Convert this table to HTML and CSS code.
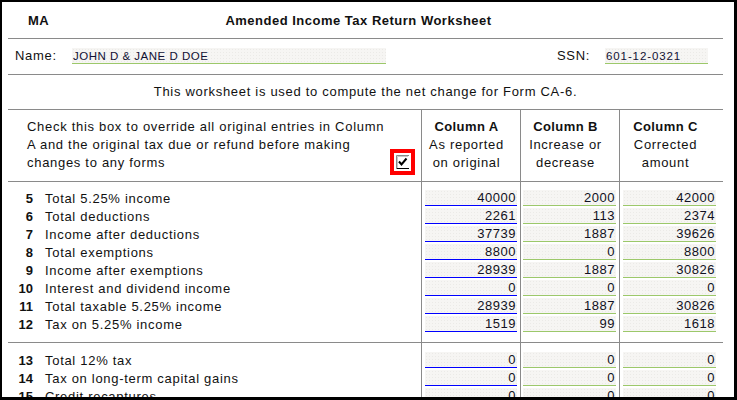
FILE: index.html
```html
<!DOCTYPE html>
<html>
<head>
<meta charset="utf-8">
<link rel="stylesheet" href="styles.css">
</head>
<body>
<div class="frame">
  <div class="sheet">
    <div class="title-row">
      <div class="state">MA</div>
      <div class="title">Amended Income Tax Return Worksheet</div>
      <div class="title-spacer"></div>
    </div>
    <div class="name-row">
      <span class="lbl name-lbl">Name:</span>
      <span class="field name-field">JOHN D &amp; JANE D DOE</span>
      <span class="spacer"></span>
      <span class="lbl ssn-lbl">SSN:</span>
      <span class="field ssn-field">601-12-0321</span>
    </div>
    <div class="intro">This worksheet is used to compute the net change for Form CA-6.</div>

    <div class="sec head-sec">
      <div class="override">
        <div class="override-text">Check this box to override all original entries in Column<br>A and the original tax due or refund before making<br>changes to any forms</div>
        <div class="chk-wrap">
          <svg class="chk" width="14" height="15" viewBox="0 0 14 15">
            <path d="M0.5 14 V0.5 H13" fill="none" stroke="#8a8a8a" stroke-width="1"/>
            <path d="M1.5 13 V1.5 H12" fill="none" stroke="#c8c8c8" stroke-width="1"/>
            <path d="M3 6.5 L5.5 9.5 L10.5 3.5" fill="none" stroke="#000" stroke-width="2"/>
            <path d="M1 13.5 H13" fill="none" stroke="#000" stroke-width="1"/>
          </svg>
        </div>
      </div>
      <div class="colhead"><b>Column A</b><br>As reported<br>on original</div>
      <div class="colhead"><b>Column B</b><br>Increase or<br>decrease</div>
      <div class="colhead colc"><b>Column C</b><br>Corrected<br>amount</div>
    </div>

    <div class="sec rows-sec first">
      <div class="lab"><span class="num">5</span><span>Total 5.25% income</span></div>
      <div class="cell a"><span class="val va">40000</span></div>
      <div class="cell b"><span class="val vg">2000</span></div>
      <div class="cell c"><span class="val vg">42000</span></div>

      <div class="lab"><span class="num">6</span><span>Total deductions</span></div>
      <div class="cell a"><span class="val va">2261</span></div>
      <div class="cell b"><span class="val vg">113</span></div>
      <div class="cell c"><span class="val vg">2374</span></div>

      <div class="lab"><span class="num">7</span><span>Income after deductions</span></div>
      <div class="cell a"><span class="val va">37739</span></div>
      <div class="cell b"><span class="val vg">1887</span></div>
      <div class="cell c"><span class="val vg">39626</span></div>

      <div class="lab"><span class="num">8</span><span>Total exemptions</span></div>
      <div class="cell a"><span class="val va">8800</span></div>
      <div class="cell b"><span class="val vg">0</span></div>
      <div class="cell c"><span class="val vg">8800</span></div>

      <div class="lab"><span class="num">9</span><span>Income after exemptions</span></div>
      <div class="cell a"><span class="val va">28939</span></div>
      <div class="cell b"><span class="val vg">1887</span></div>
      <div class="cell c"><span class="val vg">30826</span></div>

      <div class="lab"><span class="num">10</span><span>Interest and dividend income</span></div>
      <div class="cell a"><span class="val va">0</span></div>
      <div class="cell b"><span class="val vg">0</span></div>
      <div class="cell c"><span class="val vg">0</span></div>

      <div class="lab"><span class="num">11</span><span>Total taxable 5.25% income</span></div>
      <div class="cell a"><span class="val va">28939</span></div>
      <div class="cell b"><span class="val vg">1887</span></div>
      <div class="cell c"><span class="val vg">30826</span></div>

      <div class="lab"><span class="num">12</span><span>Tax on 5.25% income</span></div>
      <div class="cell a"><span class="val va">1519</span></div>
      <div class="cell b"><span class="val vg">99</span></div>
      <div class="cell c"><span class="val vg">1618</span></div>
    </div>

    <div class="sec rows-sec second">
      <div class="lab"><span class="num">13</span><span>Total 12% tax</span></div>
      <div class="cell a"><span class="val va">0</span></div>
      <div class="cell b"><span class="val vg">0</span></div>
      <div class="cell c"><span class="val vg">0</span></div>

      <div class="lab"><span class="num">14</span><span>Tax on long-term capital gains</span></div>
      <div class="cell a"><span class="val va">0</span></div>
      <div class="cell b"><span class="val vg">0</span></div>
      <div class="cell c"><span class="val vg">0</span></div>

      <div class="lab"><span class="num">15</span><span>Credit recaptures</span></div>
      <div class="cell a"><span class="val va">0</span></div>
      <div class="cell b"><span class="val vg">0</span></div>
      <div class="cell c"><span class="val vg">0</span></div>
    </div>
  </div>
</div>
</body>
</html>
```

FILE: styles.css
```css
* { box-sizing: border-box; }
html, body { margin: 0; padding: 0; background: #fff; }
body {
  font-family: "Liberation Sans", Arial, sans-serif;
  font-size: 13px;
  color: #111;
  letter-spacing: 0.7px;
}
.frame {
  width: 737px;
  height: 400px;
  border-style: solid;
  border-color: #000;
  border-width: 2px 3px 3px 2px;
  overflow: hidden;
  background: #fff;
}
.sheet {
  margin-left: 6px;
  width: 715px;
}
.title-row {
  display: flex;
  align-items: center;
  height: 37px;
  border-bottom: 1px solid #8a8a8a;
  font-weight: bold;
  letter-spacing: 0.5px;
}
.state { width: 60px; padding-left: 20px; }
.title { flex: 1; text-align: center; }
.title-spacer { width: 74px; }

.name-row {
  display: flex;
  align-items: center;
  height: 36px;
  padding-bottom: 2px;
  border-bottom: 1px solid #8a8a8a;
}
.lbl { display: block; }
.name-lbl { width: 64px; padding-left: 7px; }
.ssn-lbl { width: 48px; }
.spacer { flex: 1; }
.field {
  display: block;
  height: 16px;
  line-height: 16px;
  font-size: 11.5px;
  letter-spacing: 0.5px;
  padding-left: 1px;
  background-color: #f6f5f3;
  background-image: radial-gradient(#ebeae7 0.6px, transparent 0.8px);
  background-size: 3px 3px;
  border-bottom: 1px solid #9cc86a;
  color: #111133;
}
.name-field { width: 314px; }
.ssn-field { width: 103px; margin-right: 15px; letter-spacing: 0.9px; }

.intro {
  height: 35px;
  line-height: 33px;
  text-align: center;
  border-bottom: 1px solid #8a8a8a;
}

.sec {
  display: grid;
  grid-template-columns: 413px 99px 99px 104px;
  border-bottom: 1px solid #8a8a8a;
  background-image:
    linear-gradient(#8a8a8a, #8a8a8a),
    linear-gradient(#8a8a8a, #8a8a8a),
    linear-gradient(#8a8a8a, #8a8a8a);
  background-size: 1px 100%, 1px 100%, 1px 100%;
  background-position: 413px 0, 512px 0, 611px 0;
  background-repeat: no-repeat;
}
.head-sec {
  padding: 8px 0 9px;
  line-height: 18px;
}
.override {
  display: flex;
  padding-left: 19px;
}
.override-text { flex: 1; }
.chk-wrap {
  align-self: flex-end;
  width: 25px;
  height: 26px;
  margin: 0 6px -3px 0;
  border: 4px solid #f00;
  background: #fff;
  display: flex;
  align-items: center;
  justify-content: center;
}
.chk { display: block; }
.colhead {
  text-align: center;
  padding-right: 9px;
  padding-left: 1px;
}
.colhead b { letter-spacing: 0.4px; }
.colhead.colc { padding-right: 12px; }

.rows-sec {
  grid-auto-rows: 18px;
}
.rows-sec.first { padding: 7px 0 9px; }
.rows-sec.second { padding: 8px 0 0; border-bottom: none; height: 60px; }
.lab {
  display: flex;
  align-items: center;
  line-height: 18px;
  padding-top: 1px;
}
.num {
  width: 25px;
  text-align: right;
  font-weight: bold;
  margin-right: 12px;
  letter-spacing: 0;
}
.cell { padding-top: 1px; }
.cell.a { padding-left: 4px; }
.cell.b { padding-left: 3px; }
.cell.c { padding-left: 4px; }
.val {
  display: block;
  height: 16px;
  line-height: 16px;
  text-align: right;
  padding-right: 1px;
  letter-spacing: 0.5px;
  background-color: #f6f5f3;
  background-image: radial-gradient(#ebeae7 0.6px, transparent 0.8px);
  background-size: 3px 3px;
  color: #111122;
}
.cell.a .val { width: 92px; }
.cell.b .val, .cell.c .val { width: 93px; }
.va { border-bottom: 1px solid #0000ff; }
.vg { border-bottom: 1px solid #9cc86a; }
```
